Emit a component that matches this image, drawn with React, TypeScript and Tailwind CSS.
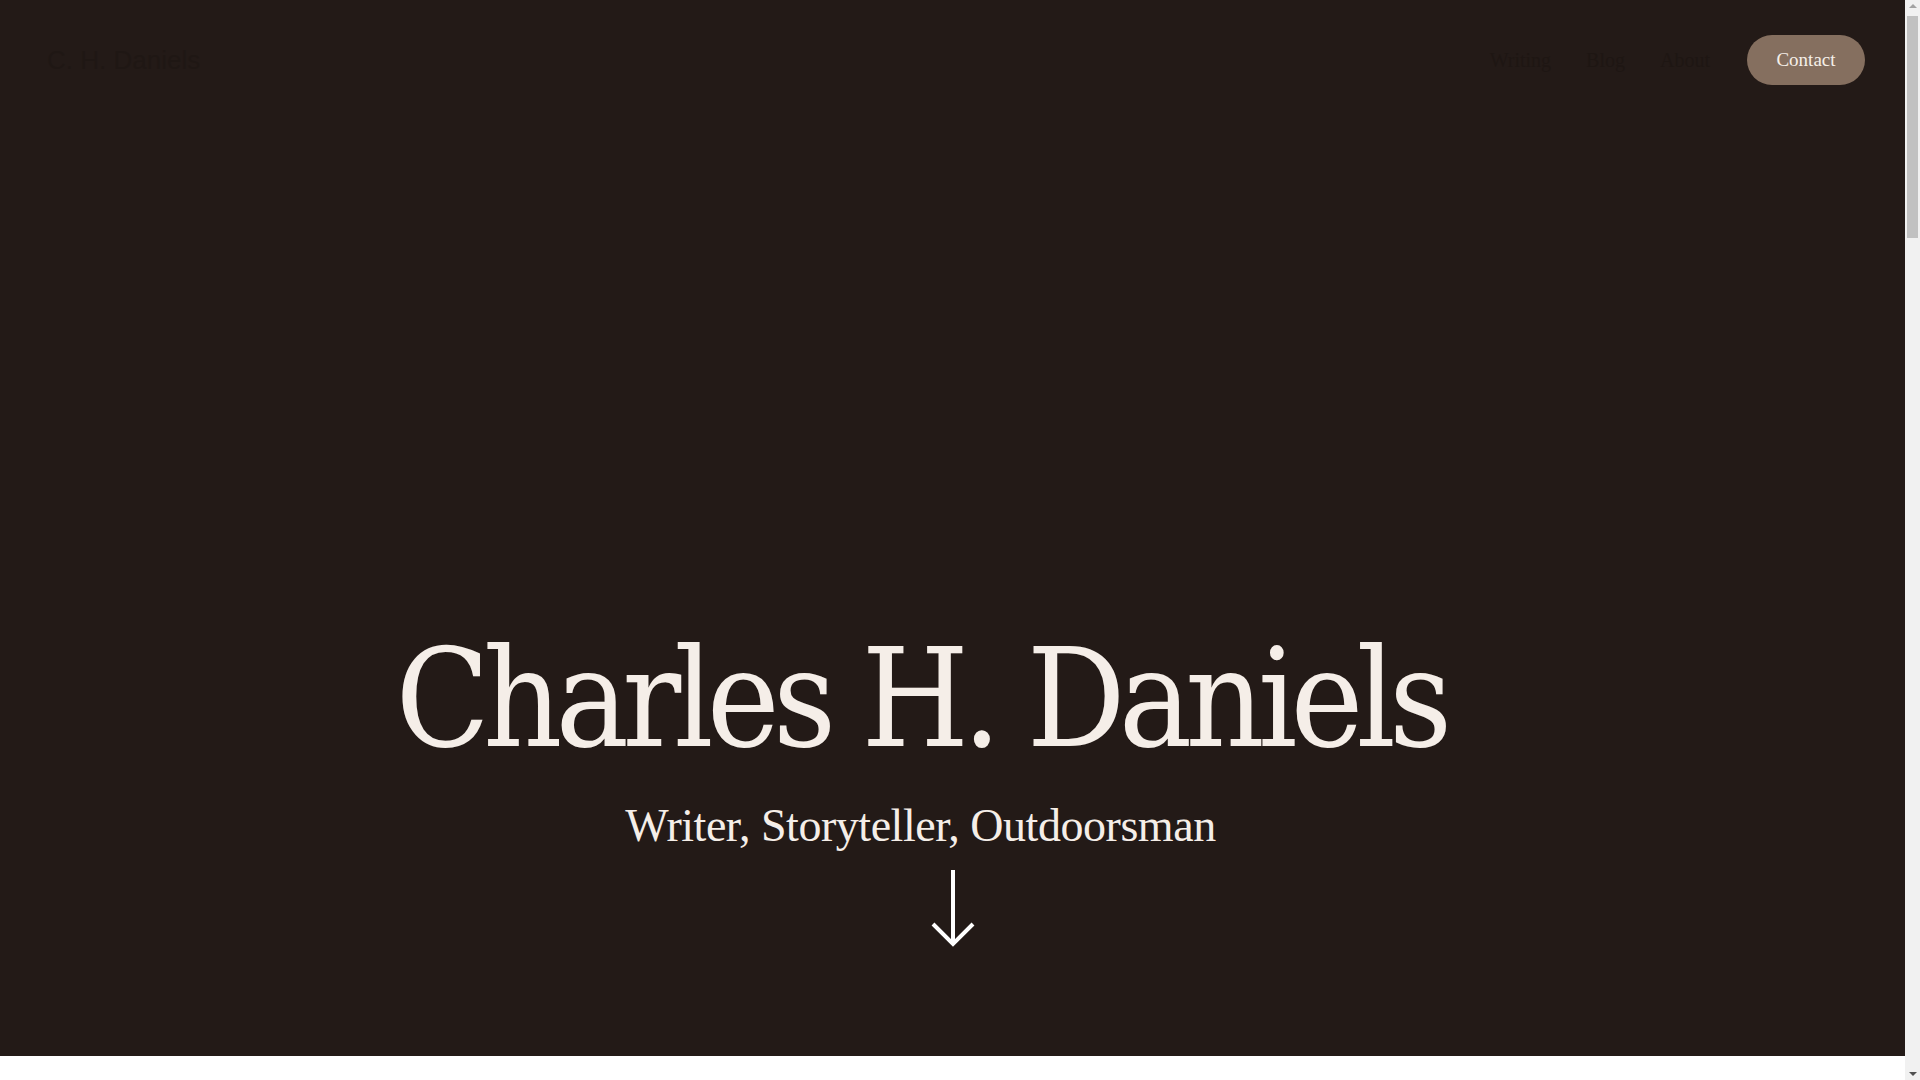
import React from "react";

const navLinks = ["Writing", "Blog", "About"];

export default function App() {
  return (
    <div className="flex w-full bg-white">
      <div className="w-[1905px] shrink-0">
        {/* Hero */}
        <section className="relative h-[1056px] w-full bg-[#231a17] flex flex-col">
          <header className="flex items-center justify-between pl-[47px] pr-[40px] pt-[35px]">
            <a
              className="text-[26px] leading-none text-[#1f1714]"
              style={{ fontFamily: '"Liberation Sans", Arial, sans-serif' }}
            >
              C. H. Daniels
            </a>
            <nav className="flex items-center">
              {navLinks.map((l) => (
                <a
                  key={l}
                  className="mr-[35px] text-[20px] text-[#1e1613]"
                  style={{ fontFamily: '"Liberation Serif", "Times New Roman", serif' }}
                >
                  {l}
                </a>
              ))}
              <button
                className="ml-[2px] h-[50px] w-[118px] rounded-full bg-[#856f5f] text-[19px] text-[#f6efe9]"
                style={{ fontFamily: '"Liberation Serif", "Times New Roman", serif' }}
              >
                Contact
              </button>
            </nav>
          </header>

          <div className="flex flex-1 flex-col items-center justify-end pb-[108px]">
            <h1
              className="pr-[64px] text-[137px] leading-none tracking-[-0.05em] text-[#f5eee8] [font-stretch:condensed]"
              style={{ fontFamily: '"DejaVu Serif Condensed", "DejaVu Serif", serif' }}
            >
              Charles H. Daniels
            </h1>
            <p
              className="mt-[36px] pr-[64px] text-[46px] leading-none tracking-[-0.01em] text-[#f5eee8]"
              style={{ fontFamily: '"Liberation Serif", "Times New Roman", serif' }}
            >
              Writer, Storyteller, Outdoorsman
            </p>
            <svg
              className="mt-[21px]"
              width="44"
              height="78"
              viewBox="0 0 44 78"
              fill="none"
              stroke="#ffffff"
              strokeWidth="4"
            >
              <line x1="22" y1="0" x2="22" y2="74" />
              <polyline points="2,54 22,74 42,54" />
            </svg>
          </div>
        </section>

        {/* Below the fold */}
        <section className="h-[3700px] w-full bg-white" />
      </div>

      {/* scrollbar track */}
      <div className="fixed right-0 top-0 flex h-screen w-[15px] flex-col items-center justify-between bg-[#f1f1f1] py-[4px]">
        <div className="flex flex-col items-center gap-[8px]">
          <div className="h-0 w-0 border-x-[4px] border-b-[4px] border-x-transparent border-b-[#a3a3a3]" />
          <div className="h-[222px] w-[11px] bg-[#c1c1c1]" />
        </div>
        <div className="h-0 w-0 border-x-[4px] border-t-[4px] border-x-transparent border-t-[#505050]" />
      </div>
    </div>
  );
}
